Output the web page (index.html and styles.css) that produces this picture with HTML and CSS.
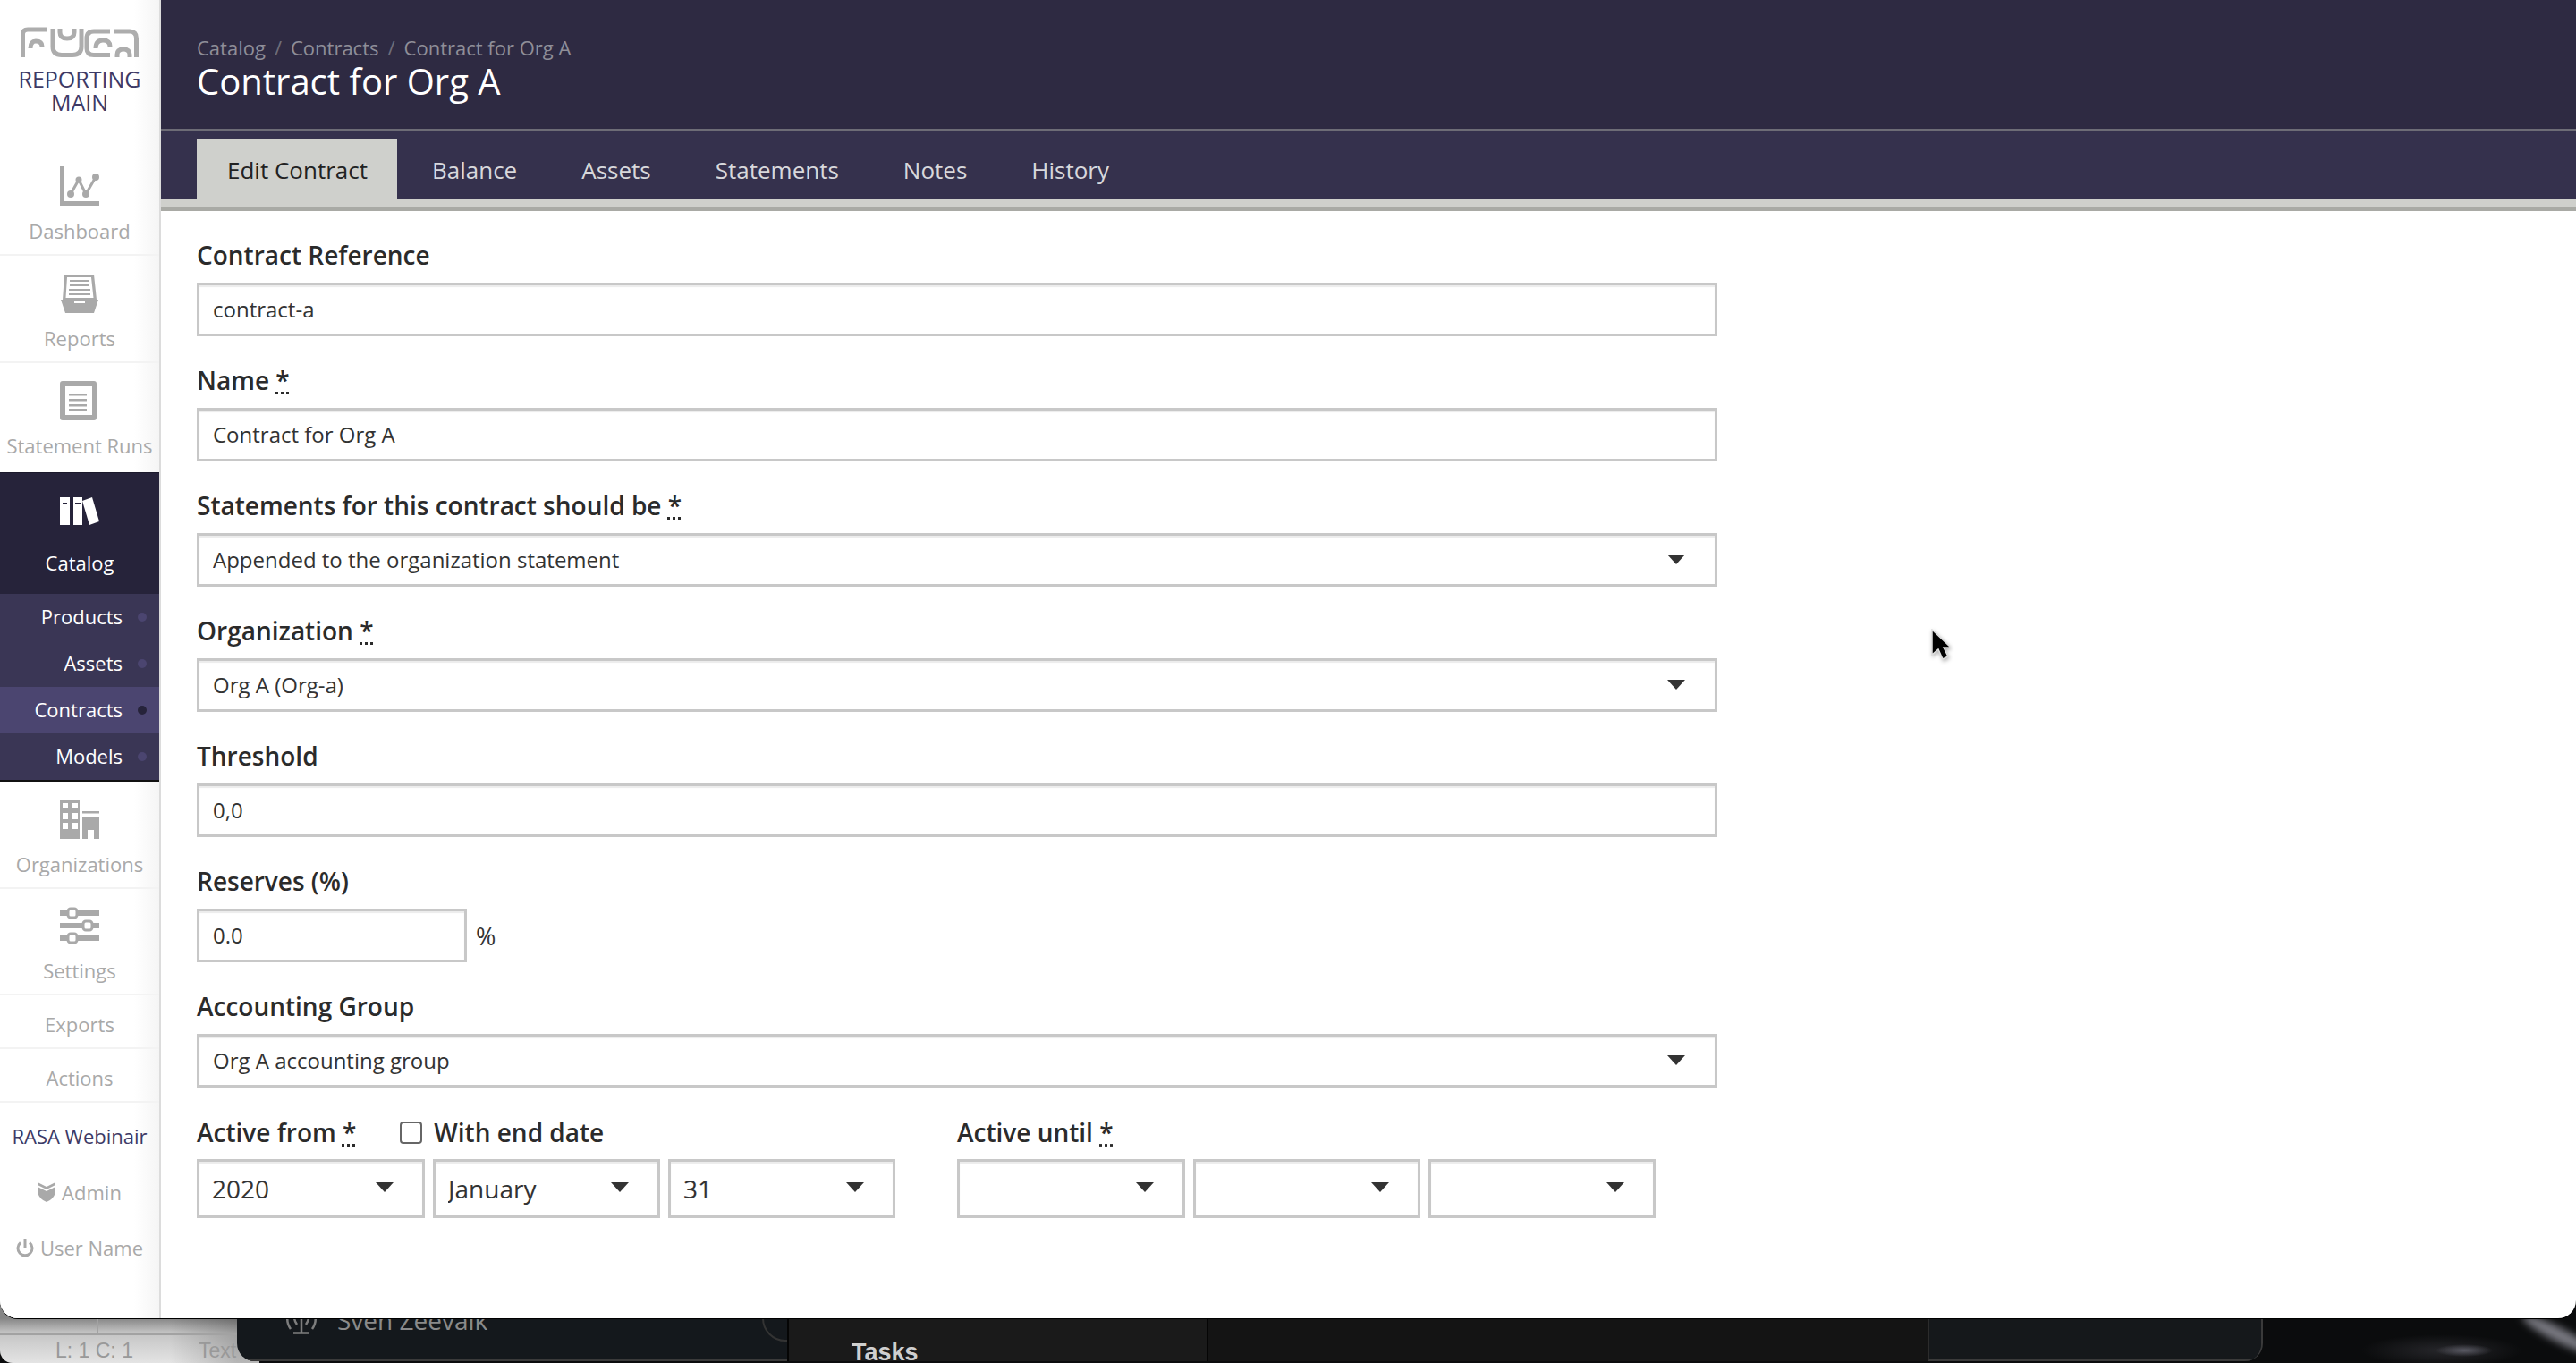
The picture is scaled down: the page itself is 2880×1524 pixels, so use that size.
FILE: index.html
```html
<!DOCTYPE html>
<html>
<head>
    <title>Contract for Org A</title>
    <link rel="stylesheet" href="styles.css">
</head>
<body>
    <div class="desktop">
        <div class="editor-status">
            <div class="status-top"><div class="status-cell"></div></div>
            <div class="status-text"><span>L: 1 C: 1</span><span class="status-mode">Text</span></div>
        </div>
        <div class="dock">
            <div class="dock-people">
                <svg class="antenna" viewBox="0 0 36 36" width="36" height="36">
                    <g fill="none" stroke="#7d7d7d" stroke-width="2.5">
                        <path d="M18 14V34M9 34.500H27"/>
                        <path d="M11 10Q8 18 13 25M25 10Q28 18 23 25"/>
                        <path d="M5 8Q-1 20 6 30M31 8Q37 20 30 30"/>
                    </g>
                </svg>
                <span class="dock-name">Sven Zeevaik</span>
            </div>
            <div class="dock-tasks"><span>Tasks</span></div>
            <div class="dock-blank"></div>
            <div class="dock-end"></div>
        </div>
    </div>

    <div class="window">
        <nav class="sidebar">
            <div class="brand">
                <svg class="logo" viewBox="0 0 132 34" width="132" height="34">
                    <g fill="none" stroke="#adadad" stroke-width="5">
                        <path d="M2.500 34V8Q2.500 3 8 3H30"/>
                        <path d="M11 24Q11 16 17 16Q24 16 24 22"/>
                        <path d="M36 2V22Q36 31.500 46 31.500H58Q68 31.500 68 22V2"/>
                        <path d="M44 2V6Q44 13 52 13Q60 13 60 6V2"/>
                        <path d="M100 5H82Q74 5 74 13V24Q74 31.500 82 31.500H100"/>
                        <path d="M84 24Q84 15 92 15Q100 15 100 22"/>
                        <path d="M104 5H122Q129.500 5 129.500 13V34"/>
                        <path d="M108 34V31Q108 25 115 25Q122 25 122 31V34"/>
                    </g>
                </svg>
                <div class="brand-name">REPORTING<br>MAIN</div>
            </div>

            <a class="nav-item">
                <svg class="nav-icon" viewBox="0 0 44 44">
                    <path d="M0 0H5V39H44V44H0Z"/>
                    <path d="M12 31L21 15L29 31L40 12" fill="none" stroke="#a9a9a9" stroke-width="3"/>
                    <circle cx="12" cy="31" r="4"/><circle cx="21" cy="15" r="3.5"/>
                    <circle cx="29" cy="31" r="4"/><circle cx="40" cy="12" r="4"/>
                </svg>
                <span>Dashboard</span>
            </a>
            <a class="nav-item">
                <svg class="nav-icon" viewBox="0 0 44 44">
                    <path d="M5 1H38L41 29H3ZM8 4L6.500 27H37.500L35 4Z" fill-rule="evenodd"/>
                    <path d="M11 7H33V9H11ZM11 12H33V14H11ZM10 17H34V19H10ZM10 22H34V24H10Z"/>
                    <path d="M1 29H43L38 44H6ZM16 31V33H28V31Z" fill-rule="evenodd"/>
                </svg>
                <span>Reports</span>
            </a>
            <a class="nav-item nav-item-last">
                <svg class="nav-icon" viewBox="0 0 44 44">
                    <path d="M3 0H38Q41 0 41 3V41Q41 44 38 44H3Q0 44 0 41V3Q0 0 3 0ZM6 6V38H36V6Z" fill-rule="evenodd"/>
                    <path d="M10 14H30V16.500H10ZM10 20H30V22.500H10ZM10 26H30V28.500H10ZM10 31H30V33H10Z"/>
                </svg>
                <span>Statement Runs</span>
            </a>

            <div class="nav-group">
                <a class="nav-active">
                    <svg class="nav-icon" viewBox="0 0 44 44">
                        <path d="M0 6H11V37H0ZM15 6H25V37H15Z" fill="#ffffff"/>
                        <path d="M25 10L36 6L44 33L33 37Z" fill="#ffffff"/>
                        <path d="M3 12H8V14H3ZM17 12H23V14H17Z" fill="#26233a"/>
                    </svg>
                    <span>Catalog</span>
                </a>
                <a class="sub-item">Products<i class="dot"></i></a>
                <a class="sub-item">Assets<i class="dot"></i></a>
                <a class="sub-item sub-item-on">Contracts<i class="dot"></i></a>
                <a class="sub-item">Models<i class="dot"></i></a>
            </div>

            <a class="nav-item">
                <svg class="nav-icon" viewBox="0 0 44 44">
                    <path d="M0 0H22V44H0ZM3 4V10H9V4ZM14 4V10H20V4ZM3 15V22H9V15ZM14 15V22H20V15ZM3 26V33H9V26ZM14 26V33H20V26Z" fill-rule="evenodd"/>
                    <path d="M25 13H44V15.500H25ZM25 19H44V44H38V34H31V44H25Z"/>
                </svg>
                <span>Organizations</span>
            </a>
            <a class="nav-item nav-item-settings">
                <svg class="nav-icon" viewBox="0 0 44 44">
                    <path d="M0 5H44V11H0ZM0 19H44V25H0ZM0 33H44V39H0Z"/>
                    <g fill="#ffffff" stroke="#a9a9a9" stroke-width="3">
                        <rect x="9" y="3" width="10" height="10" rx="3"/>
                        <rect x="26" y="17" width="10" height="10" rx="3"/>
                        <rect x="9" y="31" width="10" height="10" rx="3"/>
                    </g>
                </svg>
                <span>Settings</span>
            </a>
            <a class="nav-plain">Exports</a>
            <a class="nav-plain">Actions</a>
            <a class="nav-link nav-webinar">RASA Webinair</a>
            <a class="nav-link nav-admin">
                <svg viewBox="0 0 20 22" width="20" height="22">
                    <path d="M0 0L10 5L20 0V3L10 8L0 3Z"/>
                    <path d="M0 5L10 10L20 5V11Q18 19 10 22Q2 19 0 11Z"/>
                </svg>
                Admin
            </a>
            <a class="nav-link nav-user">
                <svg viewBox="0 0 20 22" width="20" height="22">
                    <path d="M5 5.500A8 8 0 1 0 15 5.500" fill="none" stroke="#a9a9a9" stroke-width="3"/>
                    <path d="M10 1V11" fill="none" stroke="#a9a9a9" stroke-width="3"/>
                </svg>
                User Name
            </a>
        </nav>

        <main class="main">
            <header class="page-head">
                <div class="crumbs">
                    <a>Catalog</a><em>/</em><a>Contracts</a><em>/</em><a>Contract for Org A</a>
                </div>
                <h1>Contract for Org A</h1>
            </header>
            <div class="tabs">
                <a class="tab tab-on">Edit Contract</a>
                <a class="tab">Balance</a>
                <a class="tab">Assets</a>
                <a class="tab">Statements</a>
                <a class="tab">Notes</a>
                <a class="tab">History</a>
            </div>

            <form class="form">
                <div class="form-group">
                    <label for="ref">Contract Reference</label>
                    <input type="text" id="ref" value="contract-a">
                </div>
                <div class="form-group">
                    <label for="name">Name <abbr>*</abbr></label>
                    <input type="text" id="name" value="Contract for Org A">
                </div>
                <div class="form-group">
                    <label for="mode">Statements for this contract should be <abbr>*</abbr></label>
                    <div class="select-wrap">
                        <select id="mode"><option>Appended to the organization statement</option></select>
                    </div>
                </div>
                <div class="form-group">
                    <label for="org">Organization <abbr>*</abbr></label>
                    <div class="select-wrap">
                        <select id="org"><option>Org A (Org-a)</option></select>
                    </div>
                </div>
                <div class="form-group">
                    <label for="threshold">Threshold</label>
                    <input type="text" id="threshold" value="0,0">
                </div>
                <div class="form-group">
                    <label for="reserves">Reserves (%)</label>
                    <div class="with-unit">
                        <input type="text" id="reserves" value="0.0">
                        <span>%</span>
                    </div>
                </div>
                <div class="form-group">
                    <label for="group">Accounting Group</label>
                    <div class="select-wrap">
                        <select id="group"><option>Org A accounting group</option></select>
                    </div>
                </div>
                <div class="date-row">
                    <div class="date-col date-from">
                        <div class="date-label">
                            <label>Active from <abbr>*</abbr></label>
                            <label class="check"><input type="checkbox"> With end date</label>
                        </div>
                        <div class="date-selects">
                            <div class="select-wrap date-y"><select><option>2020</option></select></div>
                            <div class="select-wrap date-m"><select><option>January</option></select></div>
                            <div class="select-wrap date-m"><select><option>31</option></select></div>
                        </div>
                    </div>
                    <div class="date-col">
                        <div class="date-label">
                            <label>Active until <abbr>*</abbr></label>
                        </div>
                        <div class="date-selects">
                            <div class="select-wrap date-y"><select><option></option></select></div>
                            <div class="select-wrap date-m"><select><option></option></select></div>
                            <div class="select-wrap date-m"><select><option></option></select></div>
                        </div>
                    </div>
                </div>
            </form>
        </main>

        <svg class="cursor" viewBox="0 0 22 36" width="22" height="36">
            <path d="M2 1V29L9 23L14 34L20 31L15 21H23Z" fill="#000000" stroke="#dddddd" stroke-width="1.500"/>
        </svg>
    </div>
</body>
</html>
```

FILE: styles.css
```css
* {
    box-sizing: border-box;
}
html, body {
    height: 100%;
}
body {
    margin: 0;
    overflow: hidden;
    position: relative;
    background-color: #0b0c0d;
    font-family: "Open Sans", Arial, sans-serif;
    color: #333;
}
a {
    display: block;
}

/* what shows behind the window */
.desktop {
    position: absolute;
    left: 0;
    right: 0;
    bottom: 0;
    height: 70px;
    display: flex;
    overflow: hidden;
    background:
        radial-gradient(ellipse 32px 7px at 2755px 56px, #5a5a64, rgba(90,90,100,0) 100%),
        radial-gradient(ellipse 90px 18px at 2730px 56px, #26262a, rgba(38,38,42,0) 100%),
        #0b0c0d;
}
.desktop::after {
    content: "";
    position: absolute;
    left: 2815px;
    top: 30px;
    width: 90px;
    height: 16px;
    border-radius: 50%;
    background-color: #77777f;
    filter: blur(4px);
    transform: rotate(27deg);
}
.editor-status {
    width: 290px;
    margin-right: -25px;
    flex: none;
    border-bottom-left-radius: 14px;
    background:
        linear-gradient(to right, rgba(0,0,0,0) 190px, rgba(0,0,0,0.2) 265px),
        linear-gradient(to bottom, #858585 20px, #c4c4c4 36px, #e4e4e4 100%);
}
.status-top {
    height: 39px;
    border-bottom: 2px solid #a2a2a2;
}
.status-cell {
    width: 110px;
    height: 100%;
    border-right: 2px solid #a2a2a2;
}
.status-text {
    display: flex;
    padding: 2px 0 0 62px;
    font-family: "Liberation Sans", Arial, sans-serif;
    font-size: 23px;
    line-height: 30px;
    color: #999;
}
.status-mode {
    margin-left: 73px;
}
.dock {
    position: relative;
    width: 2265px;
    height: 68px;
    flex: none;
    display: flex;
    overflow: hidden;
    border-radius: 0 0 20px 20px;
    border-right: 2px solid #3a3a3a;
    background-color: #14181c;
}
.dock-people {
    position: relative;
    width: 615px;
    flex: none;
    display: flex;
    align-items: flex-start;
    padding: 2px 0 0 54px;
    overflow: hidden;
    border-bottom: 2px solid #3a3a3a;
}
.dock-people::after {
    content: "";
    position: absolute;
    right: -24px;
    top: -6px;
    width: 48px;
    height: 48px;
    border: 2px solid #333;
    border-radius: 50%;
}
.antenna {
    flex: none;
}
.dock-name {
    margin: 2px 0 0 22px;
    font-size: 28px;
    line-height: 36px;
    color: #8a8a8a;
}
.dock-tasks {
    width: 469px;
    flex: none;
    padding: 48px 0 0 70px;
    border-left: 2px solid #050505;
    background-color: #1a1a1a;
    font-family: "Liberation Sans", Arial, sans-serif;
    font-weight: bold;
    font-size: 27px;
    line-height: 20px;
    color: #cfcfcf;
}
.dock-blank {
    width: 806px;
    flex: none;
    border-left: 2px solid #050505;
    background-color: #141414;
}
.dock-end {
    flex: 1;
    border-left: 2px solid #2c2c2c;
    border-bottom: 2px solid #3a3a3a;
    background-color: #15181b;
}

/* window */
.window {
    position: relative;
    height: 1474px;
    display: flex;
    overflow: hidden;
    border-radius: 0 0 20px 20px;
    background-color: white;
    box-shadow: 0 1px 0 #000;
}

/* sidebar */
.sidebar {
    width: 180px;
    flex: none;
    border-right: 2px solid #dcdcdc;
    background: linear-gradient(to right, #fff 150px, #f5f5f5);
    font-size: 22px;
    color: #a9a9a9;
    text-align: center;
}
.sidebar svg {
    fill: #a9a9a9;
}
.brand {
    height: 166px;
    padding-top: 30px;
}
.logo {
    display: block;
    margin: 0 auto 11px;
}
.brand-name {
    font-size: 25px;
    line-height: 26px;
    color: #3d3a66;
}
.nav-item {
    height: 120px;
    padding-top: 20px;
    border-bottom: 2px solid #f3f3f3;
    line-height: 30px;
}
.nav-item-last {
    height: 122px;
    border-bottom: none;
}
.nav-item-settings {
    height: 119px;
    padding-top: 19px;
}
.nav-icon {
    display: block;
    width: 44px;
    height: 44px;
    margin: 0 auto 13px 67px;
}
.nav-group {
    border-top: 1px solid #1c1a2c;
    border-bottom: 2px solid #111;
    background-color: #3a3655;
    color: white;
}
.nav-active {
    height: 135px;
    padding-top: 21px;
    background-color: #26233a;
    line-height: 30px;
}
.nav-active .nav-icon {
    margin-bottom: 20px;
}
.sub-item {
    display: flex;
    justify-content: flex-end;
    align-items: center;
    gap: 17px;
    height: 52px;
    padding: 0 14px 2px 0;
    line-height: 30px;
}
.sub-item-on {
    background-color: #4b4570;
}
.dot {
    width: 10px;
    height: 10px;
    margin-top: 2px;
    border-radius: 50%;
    background-color: #4b4570;
}
.sub-item-on .dot {
    background-color: #26233a;
}
.nav-plain {
    height: 60px;
    padding-top: 17px;
    border-bottom: 2px solid #f3f3f3;
    line-height: 30px;
}
.nav-link {
    display: flex;
    justify-content: center;
    align-items: center;
    gap: 7px;
    height: 62px;
}
.nav-webinar {
    height: 72px;
    padding-top: 2px;
    color: #3d3a66;
}
.nav-admin {
    height: 56px;
}
.nav-user {
    height: 68px;
}

/* header + tabs */
.main {
    flex: 1;
    min-width: 0;
}
.page-head {
    height: 146px;
    padding: 36px 40px 0;
    border-bottom: 2px solid #6d6c76;
    background-color: #2e2a42;
}
.crumbs {
    display: flex;
    font-size: 22px;
    line-height: 34px;
    color: #8f8e98;
}
.crumbs em {
    margin: 0 10px;
    font-style: normal;
    color: #6f6e7a;
}
h1 {
    margin: 0;
    font-size: 40px;
    font-weight: normal;
    line-height: 42px;
    color: white;
}
.tabs {
    display: flex;
    gap: 4px;
    height: 90px;
    padding: 9px 0 0 40px;
    background-color: #35314d;
    border-bottom: 4px solid #a9aaa5;
    box-shadow: inset 0 -10px 0 #cfd0cc;
}
.tab {
    height: 67px;
    padding: 17px 34px 0;
    font-size: 26px;
    line-height: 36px;
    color: #d8d8dc;
}
.tab-on {
    margin-right: 1px;
    padding-right: 33px;
    background-color: #cfd0cc;
    color: #222;
}

/* form */
.form {
    padding: 31px 40px 0;
}
.form-group {
    width: 1700px;
    margin-bottom: 31px;
}
label {
    display: block;
    margin-bottom: 13px;
    font-size: 28px;
    font-weight: 600;
    line-height: 36px;
    color: #2b2b2b;
}
abbr {
    text-decoration: underline dotted;
}
input[type="text"], select {
    display: block;
    width: 100%;
    height: 60px;
    padding: 0 15px 2px;
    border: 3px solid #c8c8c8;
    border-radius: 0;
    outline: none;
    background-color: white;
    box-shadow: inset 0 2px 1px #ececec;
    font-family: "Open Sans", Arial, sans-serif;
    font-size: 24px;
    color: #333;
    appearance: none;
}
.select-wrap {
    position: relative;
}
.select-wrap::after {
    content: "";
    position: absolute;
    right: 36px;
    top: 50%;
    margin-top: -6px;
    border-style: solid;
    border-width: 11px 10px 0;
    border-color: #333 transparent transparent;
}
.with-unit {
    display: flex;
    align-items: center;
    gap: 10px;
    font-size: 27px;
}
.with-unit input[type="text"] {
    width: 302px;
}
.date-row {
    display: flex;
    margin-top: 32px;
}
.date-col {
    width: 800px;
}
.date-from {
    width: 850px;
}
.date-label {
    display: flex;
    gap: 49px;
    margin-bottom: 12px;
}
.date-label label {
    margin: 0;
}
.check {
    display: flex;
    align-items: center;
    gap: 13px;
}
.check input {
    width: 25px;
    height: 25px;
    margin: 0;
    border: 2px solid #666;
    border-radius: 4px;
    background-color: white;
    appearance: none;
}
.date-selects {
    display: flex;
    gap: 9px;
}
.date-selects select {
    height: 66px;
    padding: 0 14px;
    font-size: 28px;
}
.date-selects .select-wrap::after {
    right: 35px;
    margin-top: -7px;
}
.date-y {
    width: 255px;
}
.date-m {
    width: 254px;
}

.cursor {
    position: absolute;
    left: 2158px;
    top: 703px;
    filter: drop-shadow(1px 2px 2px rgba(0,0,0,0.3));
}
```
